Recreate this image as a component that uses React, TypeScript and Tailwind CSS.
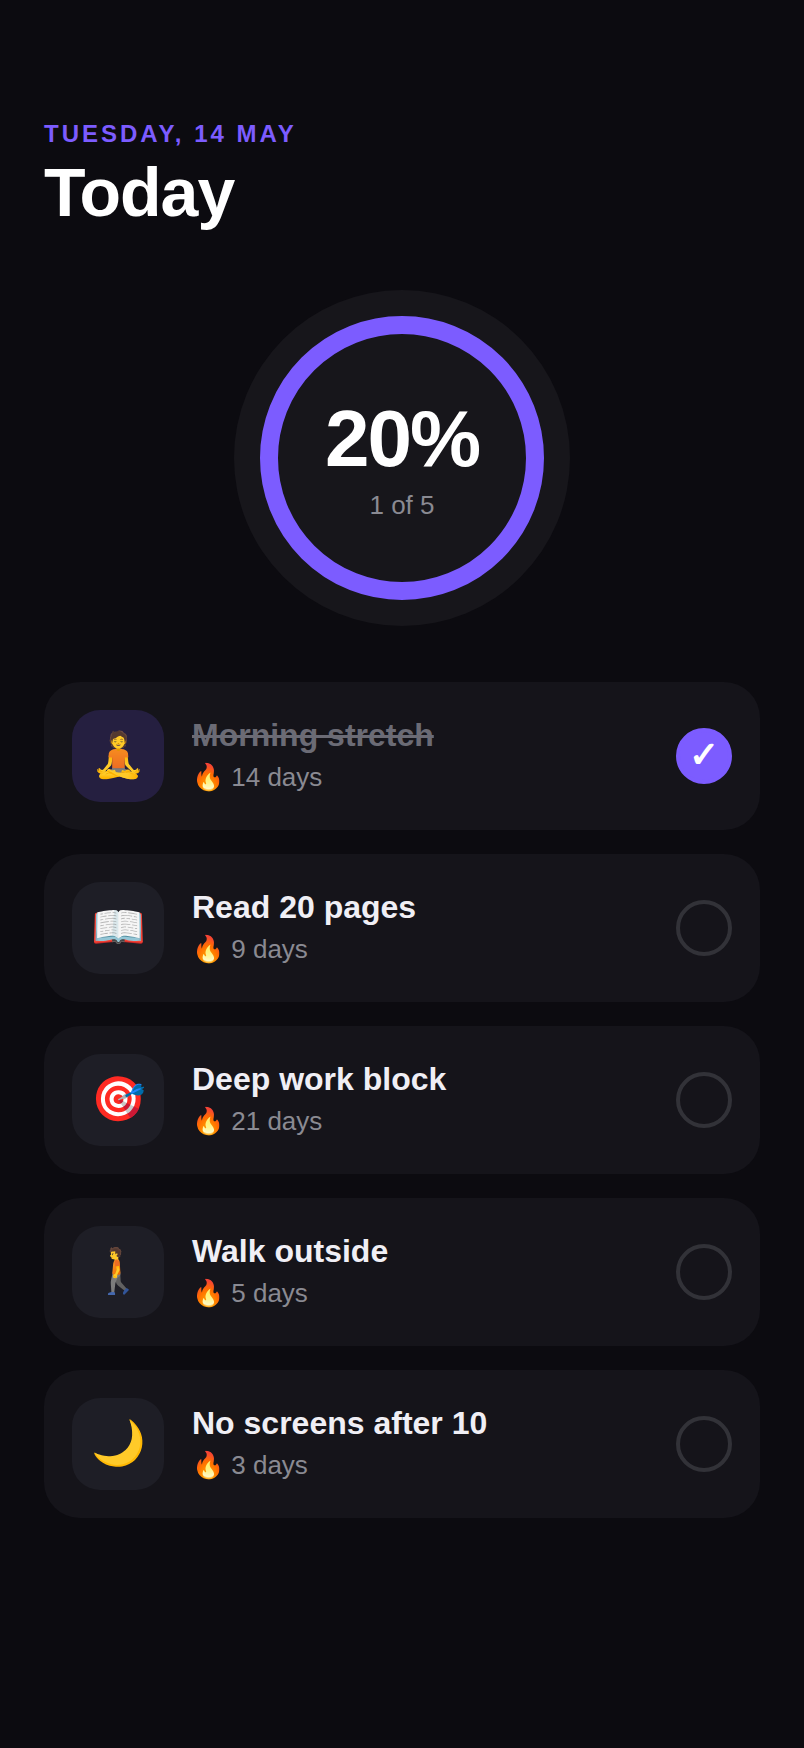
import { useState } from "react";

interface Habit {
  id: number;
  icon: string;
  title: string;
  streak: number;
  done: boolean;
}

const initialHabits: Habit[] = [
  { id: 1, icon: "🧘", title: "Morning stretch", streak: 14, done: true },
  { id: 2, icon: "📖", title: "Read 20 pages", streak: 9, done: false },
  { id: 3, icon: "🎯", title: "Deep work block", streak: 21, done: false },
  { id: 4, icon: "🚶", title: "Walk outside", streak: 5, done: false },
  { id: 5, icon: "🌙", title: "No screens after 10", streak: 3, done: false },
];

interface ringProps {
  done: number;
  total: number;
}

const ProgressRing: React.FC<ringProps> = ({ done, total }) => {
  return (
    <div className="mx-auto flex size-[336px] items-center justify-center rounded-full bg-[#17161b]">
      <div className="flex size-[284px] flex-col items-center justify-center rounded-full border-[18px] border-[#7c5cff] pb-0.5">
        <p className="text-[80px] leading-[90px] font-bold tracking-[-2px] text-white">
          {Math.round((done / total) * 100)}%
        </p>
        <p className="mt-1.5 text-[26px] leading-[30px] text-[#8a8a92]">
          {done} of {total}
        </p>
      </div>
    </div>
  );
};

interface rowProps {
  habit: Habit;
  onToggle: (id: number) => void;
}

const HabitRow: React.FC<rowProps> = ({ habit, onToggle }) => {
  const inputId = `habit-${habit.id}`;

  return (
    <li className="flex items-center gap-7 rounded-[36px] bg-[#15141a] p-7">
      <div
        className={`flex size-[92px] items-center justify-center rounded-[28px] pb-0.5 text-[44px] leading-[52px] ${
          habit.done ? "bg-[#251f40]" : "bg-[#1e1e26]"
        }`}
      >
        {habit.icon}
      </div>
      <div className="flex-1 pb-0.5">
        <label
          htmlFor={inputId}
          className={`block text-[32px] leading-[36px] font-bold ${
            habit.done ? "text-[#6b6b75] line-through" : "text-[#f0eff5]"
          }`}
        >
          {habit.title}
        </label>
        <p className="mt-2 text-[26px] leading-[32px] text-[#8a8a92]">🔥 {habit.streak} days</p>
      </div>
      <div className="grid size-14 place-items-center">
        <input
          id={inputId}
          type="checkbox"
          checked={habit.done}
          onChange={() => onToggle(habit.id)}
          className="col-start-1 row-start-1 size-14 appearance-none rounded-full border-4 border-[#323238] checked:border-[#7c5cff] checked:bg-[#7c5cff]"
        />
        {habit.done && (
          <span aria-hidden="true" className="pointer-events-none col-start-1 row-start-1 pb-0.5 text-[36px] leading-[42px] font-bold text-white">
            ✓
          </span>
        )}
      </div>
    </li>
  );
};

export default function App() {
  const [habits, setHabits] = useState(initialHabits);

  const toggle = (id: number) => {
    setHabits(habits.map((h) => (h.id === id ? { ...h, done: !h.done } : h)));
  };

  return (
    <main className="min-h-screen bg-[#0c0b10] px-11 pt-[120px] pb-11 font-['Liberation_Sans',Arial,sans-serif]">
      <header>
        <p className="text-[24px] leading-[28px] font-bold tracking-[3px] text-[#7c5cff] uppercase">
          Tuesday, 14 May
        </p>
        <h1 className="mt-1 text-[68px] leading-[80px] font-bold tracking-[-1px] text-white">Today</h1>
      </header>
      <section aria-label="Progress" className="mt-[58px]">
        <ProgressRing done={habits.filter((h) => h.done).length} total={habits.length} />
      </section>
      <ul className="mt-14 flex flex-col gap-6">
        {habits.map((habit) => (
          <HabitRow key={habit.id} habit={habit} onToggle={toggle} />
        ))}
      </ul>
    </main>
  );
}
